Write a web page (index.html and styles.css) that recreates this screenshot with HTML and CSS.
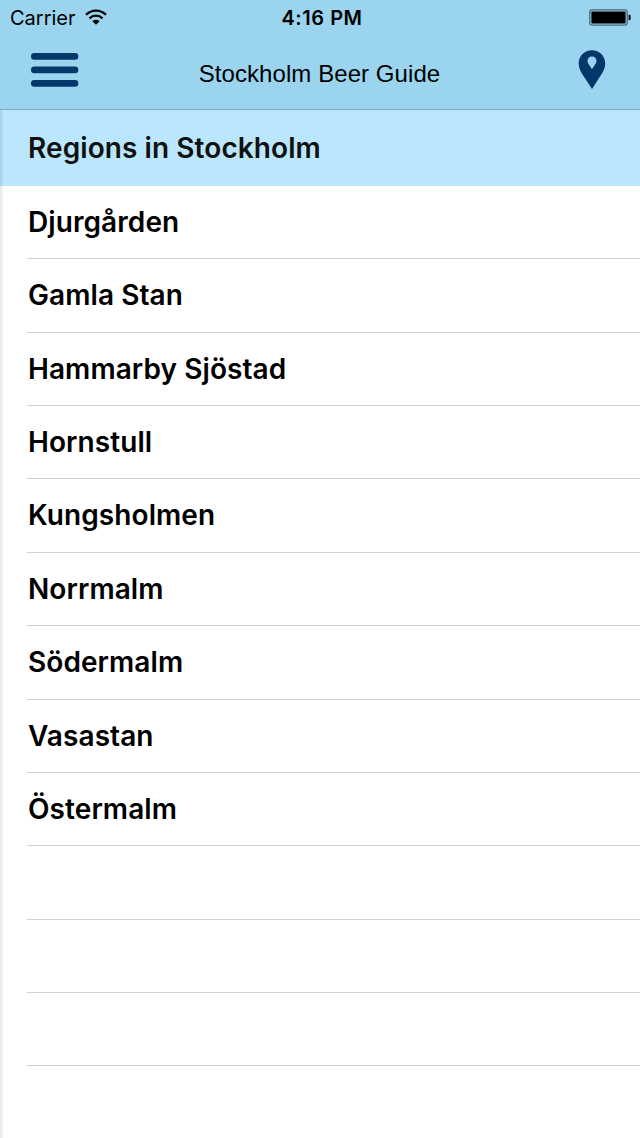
FILE: index.html
```
<!doctype html>
<html lang="en">
  <head>
    <title>Stockholm Beer Guide</title>
    <meta charset="UTF-8">
    <meta name="viewport" content="width=device-width, initial-scale=1">
    <link rel="stylesheet" href="styles.css">
  </head>
  <body>
<header class="top">
  <div class="status">
    <div class="carrier">
      <span>Carrier</span>
      <svg class="wifi" width="22" height="16" viewBox="0 0 22 16">
        <g fill="none" stroke="#000" stroke-width="2.3">
          <path d="M1 5.8a14 14 0 0 1 20 0"/>
          <path d="M4.5 9.4a9.1 9.1 0 0 1 13 0"/>
        </g>
        <path d="M7.4 12.2a5.2 5.2 0 0 1 7.2 0L11 15.8z"/>
      </svg>
    </div>
    <time class="clock">4:16 PM</time>
    <svg class="battery" width="42" height="17" viewBox="0 0 42 17">
      <rect x=".8" y=".8" width="37.4" height="15.4" rx="2.4" fill="none" stroke="#48697a" stroke-width="1.3"/>
      <rect x="2.4" y="2.4" width="34.2" height="12.2" rx=".8"/>
      <path d="M39.6 5.8h.8q1.2 0 1.2 1.2v3q0 1.2-1.2 1.2h-.8z"/>
    </svg>
  </div>
  <nav class="bar">
    <svg class="menu" width="48" height="34" viewBox="0 0 48 34">
      <path d="M3.300 3.400h40.700M3.300 16.900h40.700M3.300 30.400h40.700" stroke="#04386b" stroke-width="6.600" stroke-linecap="round"/>
    </svg>
    <h1 class="title">Stockholm Beer Guide</h1>
    <svg class="pin" width="28" height="40" viewBox="0 0 28 40">
      <path fill="#04386b" fill-rule="evenodd" d="M14 .3C6.500.3.700 6.100.700 13.400c0 4.100 1.700 7.500 3.800 11.200L14 39l9.300-14.400c2.200-3.600 3.900-7.100 3.900-11.200C27.200 6.100 21.400.3 14 .3zM14 6.500c2.600 0 4.500 2 4.500 4.600 0 2.700-2.600 4.700-4.500 8.400-1.900-3.700-4.500-5.700-4.500-8.400C9.500 8.500 11.400 6.500 14 6.500z"/>
    </svg>
  </nav>
</header>
<main class="content">
  <h2 class="heading">Regions in Stockholm</h2>
  <ul class="regions">
    <li>Djurgården</li>
    <li>Gamla Stan</li>
    <li>Hammarby Sjöstad</li>
    <li>Hornstull</li>
    <li>Kungsholmen</li>
    <li>Norrmalm</li>
    <li>Södermalm</li>
    <li>Vasastan</li>
    <li>Östermalm</li>
    <li></li>
    <li></li>
    <li></li>
  </ul>
</main>
  </body>
</html>
```
FILE: styles.css
```
* {
  box-sizing: border-box;
}
body {
  margin: 0;
  height: 1138px;
  overflow: hidden;
  display: flex;
  flex-direction: column;
  background: white;
  color: black;
  font-family: Inter, "Liberation Sans", sans-serif;
}
.top {
  height: 110px;
  background: #9ad4ee;
  border-bottom: 1px solid #7ba9be;
}
.status {
  height: 36px;
  padding: 0 9px 0 10px;
  display: grid;
  grid-template-columns: 1fr auto 1fr;
  align-items: center;
  font-size: 20px;
}
.carrier {
  display: flex;
  align-items: center;
  gap: 9px;
}
.wifi {
  margin-top: -2px;
}
.clock {
  padding-left: 3px;
  font-weight: 600;
  letter-spacing: 0.55px;
}
.battery {
  justify-self: end;
  margin-top: -2px;
}
.bar {
  height: 73px;
  padding: 0 34px 0 31px;
  display: grid;
  grid-template-columns: 1fr auto 1fr;
  align-items: start;
}
.menu {
  margin-top: 17px;
}
.title {
  margin: 24px 0 0;
  padding-left: 2px;
  font: 24px/28px "Liberation Sans", sans-serif;
  letter-spacing: 0.07px;
}
.pin {
  margin-top: 14px;
  justify-self: end;
}
.content {
  flex: 1;
  position: relative;
}
/* shadow along the left edge of the list */
.content::before {
  content: "";
  position: absolute;
  inset: 0 auto 0 0;
  width: 4px;
  background: linear-gradient(to right, rgba(0,0,0,.1), rgba(0,0,0,0));
}
.heading,
.regions {
  font-size: 28px;
  font-weight: 600;
  letter-spacing: 0.08px;
}
.heading {
  margin: 0;
  height: 76px;
  padding-left: 28px;
  background: #bae7fd;
  color: #111;
  line-height: 76px;
}
.regions {
  margin: 0;
  padding: 0 0 0 27px;
  list-style: none;
}
.regions > li {
  height: 73.36px;
  padding-left: 1px;
  border-bottom: 1px solid #d0d0d2;
  line-height: 72px;
}
```
